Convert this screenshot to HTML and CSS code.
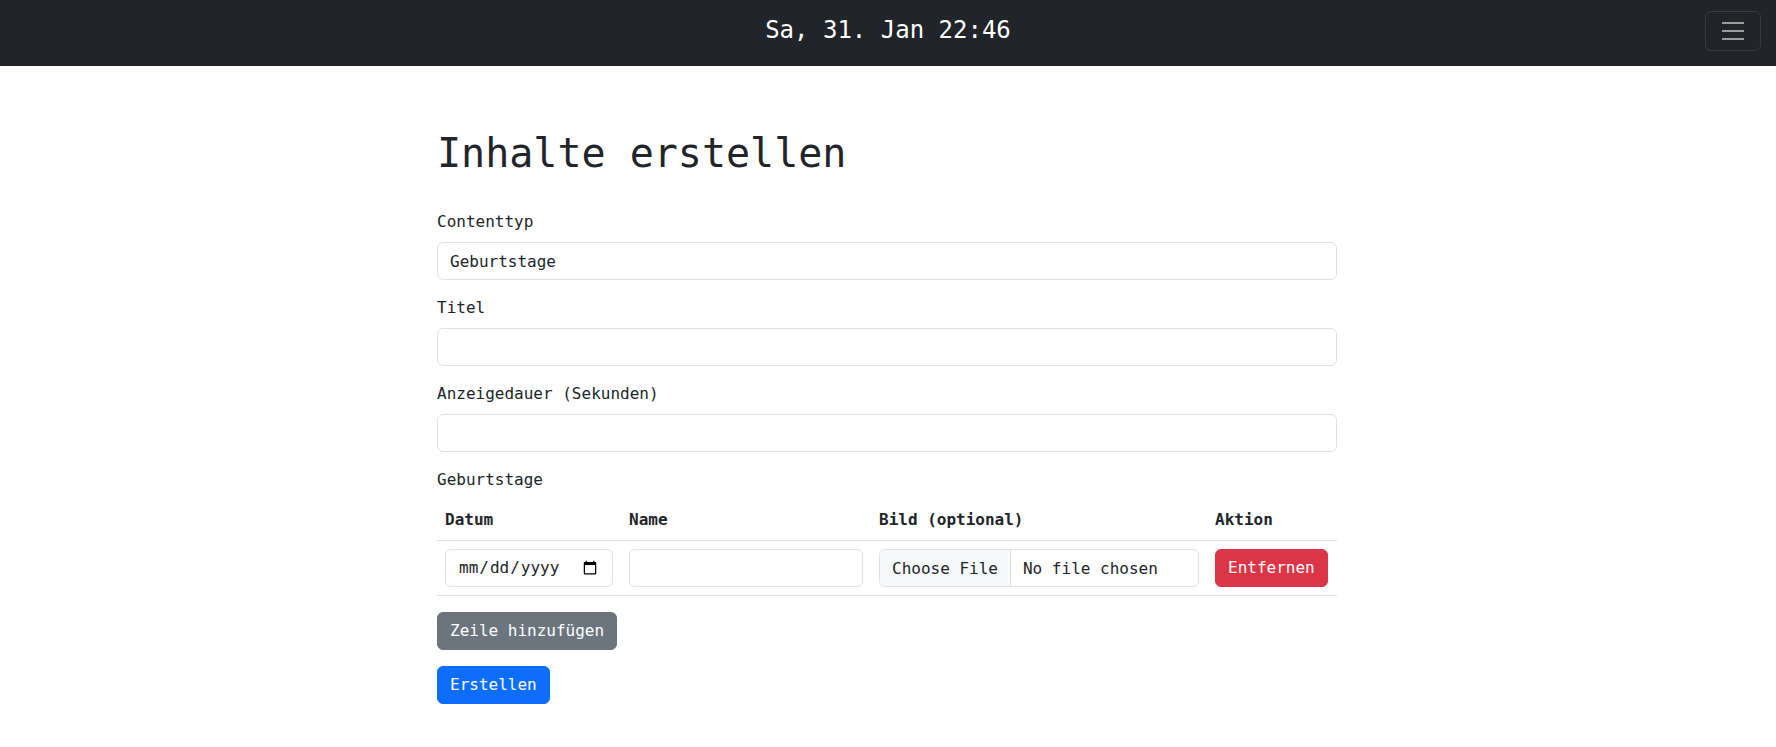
FILE: index.html
```html
<!DOCTYPE html>
<html lang="de">
<head>
<meta charset="utf-8">
<title>Inhalte erstellen</title>
<link rel="stylesheet" href="styles.css">
</head>
<body>
<nav class="navbar">
  <div class="nav-side"></div>
  <div class="brand">Sa, 31. Jan 22:46</div>
  <div class="nav-side nav-right">
    <button class="toggler" type="button" aria-label="Menü">
      <svg width="30" height="30" viewBox="0 0 30 30"><path d="M4 7h22M4 15h22M4 23h22" stroke="rgba(255,255,255,0.55)" stroke-width="2" stroke-linecap="butt" stroke-miterlimit="10"/></svg>
    </button>
  </div>
</nav>
<main class="container">
  <h1 class="title">Inhalte erstellen</h1>
  <form class="form">
    <div class="group">
      <label class="label" for="ctype">Contenttyp</label>
      <input class="control" id="ctype" type="text" value="Geburtstage" readonly>
    </div>
    <div class="group">
      <label class="label" for="titel">Titel</label>
      <input class="control" id="titel" type="text">
    </div>
    <div class="group">
      <label class="label" for="dauer">Anzeigedauer (Sekunden)</label>
      <input class="control" id="dauer" type="number">
    </div>
    <div class="group">
      <div class="label">Geburtstage</div>
      <table class="table">
        <colgroup>
          <col class="c-datum"><col class="c-name"><col class="c-bild"><col class="c-aktion">
        </colgroup>
        <thead>
          <tr><th>Datum</th><th>Name</th><th>Bild (optional)</th><th>Aktion</th></tr>
        </thead>
        <tbody>
          <tr>
            <td><input class="control" type="date"></td>
            <td><input class="control" type="text"></td>
            <td><input class="control file" type="file"></td>
            <td><button class="btn btn-danger" type="button">Entfernen</button></td>
          </tr>
        </tbody>
      </table>
      <button class="btn btn-secondary" type="button">Zeile hinzufügen</button>
    </div>
    <div class="group">
      <button class="btn btn-primary" type="submit">Erstellen</button>
    </div>
  </form>
</main>
</body>
</html>
```

FILE: styles.css
```css
* { box-sizing: border-box; }
html, body { margin: 0; padding: 0; }
body {
  font-family: "DejaVu Sans Mono", "Liberation Mono", monospace;
  font-size: 16px;
  line-height: 24px;
  color: #212529;
  background: #fff;
}
.navbar {
  height: 66px;
  background: #212529;
  display: grid;
  grid-template-columns: 1fr auto 1fr;
  align-items: start;
  padding: 11px 15px 0 15px;
}
.brand {
  color: #fff;
  font-size: 24px;
  line-height: 30px;
  padding-top: 4px;
  white-space: nowrap;
}
.nav-right { display: flex; justify-content: flex-end; }
.toggler {
  width: 56px;
  height: 40px;
  padding: 4px 12px;
  background: transparent;
  border: 1px solid rgba(255,255,255,0.1);
  border-radius: 6px;
  display: flex;
  align-items: center;
  justify-content: center;
}
.toggler svg { display: block; }
.container {
  width: 902px;
  margin: 0 auto;
  padding: 63px 2px 0 0;
}
.title {
  font-size: 40px;
  line-height: 48px;
  font-weight: 500;
  margin: 0 0 33px 0;
}
.group { margin-bottom: 16px; }
.label {
  display: block;
  margin-bottom: 8px;
}
.control {
  display: block;
  width: 100%;
  height: 38px;
  padding: 6px 12px;
  font: inherit;
  font-size: 16px;
  line-height: 24px;
  color: #212529;
  background: #fff;
  border: 1px solid #dee2e6;
  border-radius: 6px;
  outline: none;
}
.control.file { overflow: hidden; }
.control.file::file-selector-button {
  padding: 6px 12px;
  margin: -6px 12px -6px -12px;
  height: 38px;
  font: inherit;
  color: #212529;
  background: #f8f9fa;
  border: 0 solid #dee2e6;
  border-right-width: 1px;
  border-radius: 0;
}
.control[type=date]::-webkit-calendar-picker-indicator { margin-left: 0; }
.table {
  width: 100%;
  border-collapse: collapse;
  table-layout: fixed;
  margin-bottom: 16px;
}
.c-datum { width: 184px; }
.c-name { width: 250px; }
.c-bild { width: 336px; }
.c-aktion { width: 130px; }
.table th, .table td {
  padding: 8px;
  text-align: left;
  vertical-align: top;
  border-bottom: 1px solid #dee2e6;
}
.table th { font-weight: 700; }
.btn {
  display: inline-block;
  padding: 6px 12px;
  font: inherit;
  font-size: 16px;
  line-height: 24px;
  color: #fff;
  border: 1px solid transparent;
  border-radius: 6px;
  cursor: pointer;
}
.btn-secondary { background: #6c757d; border-color: #6c757d; }
.btn-primary { background: #0d6efd; border-color: #0d6efd; }
.btn-danger { background: #dc3545; border-color: #dc3545; }
```
